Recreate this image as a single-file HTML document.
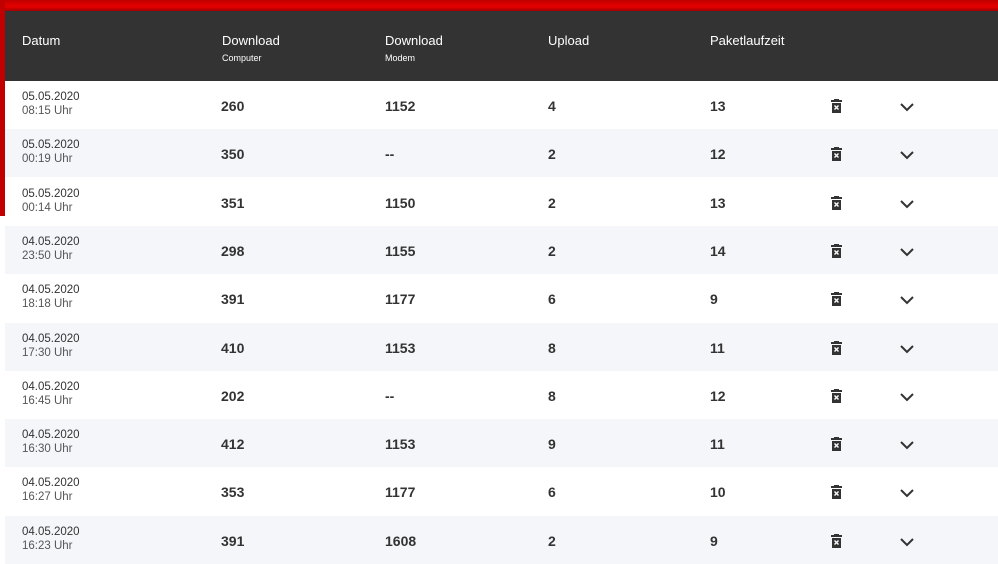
<!DOCTYPE html>
<html><head><meta charset="utf-8"><style>
body{margin:0;width:998px;height:554px;overflow:hidden;background:#fff;font-family:"Liberation Sans",sans-serif;position:relative}
.red{position:absolute;left:0;top:0;width:998px;height:11px;background:linear-gradient(#c00000,#e60000 60%,#a00000)}
.redl{position:absolute;left:0;top:0;width:5px;height:216px;background:#c00000}
.hdr{position:absolute;left:5px;top:11px;width:993px;height:70px;background:#333;color:#fff}
.h{position:absolute;top:22px;font-size:13px}
.h small{display:block;font-size:9px;margin-top:5px}
.row{position:absolute;left:5px;width:993px;height:48px;color:#333}
.d{position:absolute;left:17px;top:9px;font-size:11.5px;line-height:14px}
.d span{color:#555}
.v{position:absolute;top:17px;font-size:14px;font-weight:bold}
.t{position:absolute;left:826px;top:18px}
.c{position:absolute;left:895px;top:21px}
</style></head><body>
<div class="red"></div><div class="redl"></div>
<div class="hdr">
<div class="h" style="left:17px">Datum</div>
<div class="h" style="left:217px">Download<small>Computer</small></div>
<div class="h" style="left:380px">Download<small>Modem</small></div>
<div class="h" style="left:543px">Upload</div>
<div class="h" style="left:705px">Paketlaufzeit</div>
</div>
<div id="rows"></div>
<script>
var d=[["05.05.2020","08:15",260,1152,4,13],["05.05.2020","00:19",350,"--",2,12],["05.05.2020","00:14",351,1150,2,13],["04.05.2020","23:50",298,1155,2,14],["04.05.2020","18:18",391,1177,6,9],["04.05.2020","17:30",410,1153,8,11],["04.05.2020","16:45",202,"--",8,12],["04.05.2020","16:30",412,1153,9,11],["04.05.2020","16:27",353,1177,6,10],["04.05.2020","16:23",391,1608,2,9]];
var h='';d.forEach(function(r,i){var y=81+i*48.3;
h+='<div class="row" style="top:'+y+'px;background:'+(i%2?'#f5f6fa':'#fff')+'"><div class="d">'+r[0]+'<br><span>'+r[1]+' Uhr</span></div>'+
'<div class="v" style="left:216px">'+r[2]+'</div><div class="v" style="left:380px">'+r[3]+'</div><div class="v" style="left:543px">'+r[4]+'</div><div class="v" style="left:705px">'+r[5]+'</div>'+
'<svg class="t" width="11" height="14" viewBox="0 0 11 14"><rect x="0" y="1" width="11" height="2" fill="#333"/><rect x="3" y="0" width="5" height="2" fill="#333"/><rect x="1" y="4" width="9" height="10" fill="#333"/><path d="M3.5 6.5l4 4M7.5 6.5l-4 4" stroke="#fff" stroke-width="1.4"/></svg>'+
'<svg class="c" width="14" height="10" viewBox="0 0 14 10"><path d="M1 2l6 6 6-6" fill="none" stroke="#333" stroke-width="2"/></svg></div>';});
document.getElementById('rows').innerHTML=h;
</script>
</body></html>
